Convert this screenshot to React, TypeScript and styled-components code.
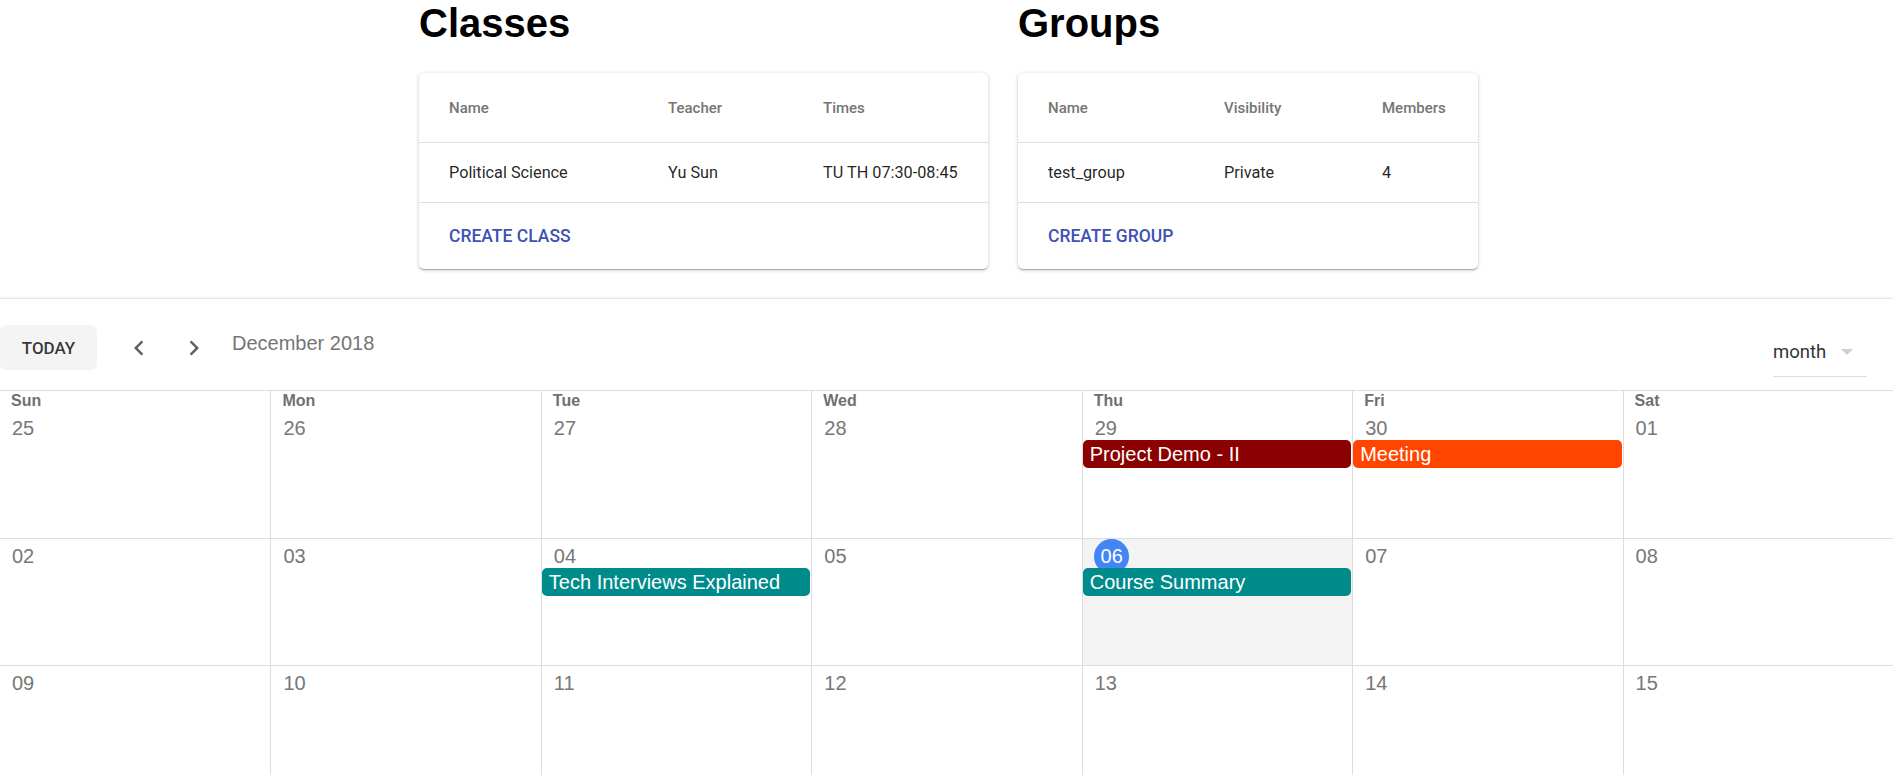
import React from "react";
import styled, { createGlobalStyle } from "styled-components";

const GlobalStyle = createGlobalStyle`
  html, body { margin: 0; padding: 0; background: #fff; }
  body { font-family: "Liberation Sans", Arial, sans-serif; }
  *, *::before, *::after { box-sizing: border-box; }
`;

const Page = styled.div`
  width: 100%;
`;

const Summary = styled.section`
  display: flex;
  justify-content: center;
  gap: 30px;
  padding-left: 4px;
  padding-bottom: 29px;
`;

const Panel = styled.div<{ $width: number }>`
  display: flex;
  flex-direction: column;
  gap: 27px;
  width: ${(p) => p.$width}px;
`;

const Heading = styled.h1`
  margin: 0;
  font: bold 40px/46px "Liberation Sans", Arial, sans-serif;
  color: #000;
`;

const Card = styled.div`
  background: #fff;
  border-radius: 5px;
  box-shadow: 0 1px 4px 0 rgba(0, 0, 0, 0.2), 0 1px 1px 0 rgba(0, 0, 0, 0.14),
    0 2px 1px -1px rgba(0, 0, 0, 0.12);
  font-family: Roboto, "Liberation Sans", Arial, sans-serif;
`;

const TableRow = styled.div<{ $cols: string; $height: number }>`
  display: grid;
  grid-template-columns: ${(p) => p.$cols};
  align-items: center;
  padding: 0 30px;
  height: ${(p) => p.$height}px;
  border-bottom: 1px solid #e0e0e0;
`;

const HeadCell = styled.div`
  font-size: 15px;
  font-weight: 500;
  color: #757575;
  white-space: nowrap;
`;

const BodyCell = styled.div`
  font-size: 16.25px;
  font-weight: 400;
  color: rgba(0, 0, 0, 0.87);
  white-space: nowrap;
`;

const CardFooter = styled.div`
  height: 66px;
  display: flex;
  align-items: center;
  padding: 0 30px;
`;

const TextButton = styled.button`
  border: 0;
  background: none;
  padding: 0;
  font-family: Roboto, "Liberation Sans", Arial, sans-serif;
  font-size: 17.5px;
  font-weight: 500;
  color: #3f51b5;
  text-transform: uppercase;
  cursor: pointer;
`;

const CalendarSection = styled.section`
  border-top: 1px solid #e8e8e8;
  box-shadow: 0 -1px 3px rgba(0, 0, 0, 0.04);
`;

const Toolbar = styled.div`
  height: 91px;
  display: flex;
  align-items: flex-start;
  justify-content: space-between;
  padding: 26px 26px 0 0;
`;

const ToolGroup = styled.div`
  display: flex;
  align-items: flex-start;
`;

const TodayButton = styled.button`
  width: 97px;
  height: 45px;
  border: 0;
  border-radius: 6px;
  background: #f4f4f4;
  font-family: Roboto, "Liberation Sans", Arial, sans-serif;
  font-size: 17px;
  font-weight: 500;
  color: rgba(0, 0, 0, 0.78);
  padding: 0;
`;

const NavGroup = styled.div`
  display: flex;
  gap: 11px;
  margin-left: 20px;
`;

const NavButton = styled.button`
  width: 44px;
  height: 45px;
  border: 0;
  background: none;
  padding: 0;
  display: flex;
  align-items: center;
  justify-content: center;
  color: #616161;
`;

const Title = styled.div`
  margin-left: 16px;
  margin-top: 6px;
  font-size: 20px;
  line-height: 24px;
  color: #757575;
`;

const SelectBox = styled.div`
  width: 94px;
  height: 36px;
  margin-top: 16px;
  display: flex;
  align-items: flex-start;
  justify-content: space-between;
  border-bottom: 1px solid #dcdcdc;
`;

const SelectValue = styled.span`
  font-family: Roboto, "Liberation Sans", Arial, sans-serif;
  font-size: 18.5px;
  line-height: 22px;
  color: #333;
`;

const Caret = styled.svg`
  margin-top: 8px;
  margin-right: 14px;
`;

const MonthGrid = styled.div`
  border-top: 1px solid #ddd;
`;

const Week = styled.div<{ $height: number; $first?: boolean }>`
  display: grid;
  grid-template-columns: repeat(7, 1fr);
  height: ${(p) => p.$height}px;
  border-top: ${(p) => (p.$first ? "0" : "1px solid #ddd")};
`;

const DayName = styled.div`
  padding-left: 11px;
  font-size: 16px;
  font-weight: bold;
  line-height: 20px;
  color: #707070;
  & + & {
    border-left: 1px solid #ddd;
  }
`;

const DayCell = styled.div<{ $today?: boolean }>`
  min-width: 0;
  background: ${(p) => (p.$today ? "#f3f3f3" : "transparent")};
  & + & {
    border-left: 1px solid #ddd;
  }
`;

const DateLine = styled.div`
  height: 29px;
  padding-left: 12px;
`;

const DateNum = styled.span<{ $today?: boolean }>`
  display: inline-flex;
  align-items: center;
  justify-content: center;
  height: 35px;
  min-width: ${(p) => (p.$today ? "35px" : "0")};
  margin-left: ${(p) => (p.$today ? "-0.5px" : "0")};
  border-radius: 50%;
  background: ${(p) => (p.$today ? "#4285f4" : "transparent")};
  color: ${(p) => (p.$today ? "#fff" : "#777")};
  font-size: 20px;
  line-height: 35px;
`;

const EventBar = styled.div<{ $color: string }>`
  position: relative;
  z-index: 1;
  height: 28px;
  margin-right: 1px;
  padding-left: 7px;
  border-radius: 5px;
  background: ${(p) => p.$color};
  color: #fff;
  font-size: 20px;
  line-height: 28px;
  white-space: nowrap;
  overflow: hidden;
  text-overflow: ellipsis;
`;

const ChevronIcon = ({ dir }: { dir: "left" | "right" }) => (
  <svg width="30" height="30" viewBox="0 0 24 24" fill="currentColor">
    {dir === "left" ? (
      <path d="M15.41 7.41L14 6l-6 6 6 6 1.41-1.41L10.83 12z" />
    ) : (
      <path d="M10 6L8.59 7.41 13.17 12l-4.58 4.59L10 18l6-6z" />
    )}
  </svg>
);

type Ev = { title: string; color: string };
type Day = { n: number; today?: boolean; ev?: Ev };

const DARKRED = "#8b0000";
const ORANGE = "#ff4500";
const TEAL = "#008b8b";

const weeks: Day[][] = [
  [
    { n: 25 },
    { n: 26 },
    { n: 27 },
    { n: 28 },
    { n: 29, ev: { title: "Project Demo - II", color: DARKRED } },
    { n: 30, ev: { title: "Meeting", color: ORANGE } },
    { n: 1 },
  ],
  [
    { n: 2 },
    { n: 3 },
    { n: 4, ev: { title: "Tech Interviews Explained", color: TEAL } },
    { n: 5 },
    { n: 6, today: true, ev: { title: "Course Summary", color: TEAL } },
    { n: 7 },
    { n: 8 },
  ],
  [9, 10, 11, 12, 13, 14, 15].map((n) => ({ n })),
];

const dayNames = ["Sun", "Mon", "Tue", "Wed", "Thu", "Fri", "Sat"];
const pad = (n: number) => (n < 10 ? `0${n}` : `${n}`);

const CLASS_COLS = "219px 155px 1fr";
const GROUP_COLS = "176px 158px 1fr";

export default function App() {
  return (
    <Page>
      <GlobalStyle />
      <Summary>
        <Panel $width={569}>
          <Heading>Classes</Heading>
          <Card>
            <TableRow $cols={CLASS_COLS} $height={70}>
              <HeadCell>Name</HeadCell>
              <HeadCell>Teacher</HeadCell>
              <HeadCell>Times</HeadCell>
            </TableRow>
            <TableRow $cols={CLASS_COLS} $height={60}>
              <BodyCell>Political Science</BodyCell>
              <BodyCell>Yu Sun</BodyCell>
              <BodyCell>TU TH 07:30-08:45</BodyCell>
            </TableRow>
            <CardFooter>
              <TextButton>Create Class</TextButton>
            </CardFooter>
          </Card>
        </Panel>
        <Panel $width={460}>
          <Heading>Groups</Heading>
          <Card>
            <TableRow $cols={GROUP_COLS} $height={70}>
              <HeadCell>Name</HeadCell>
              <HeadCell>Visibility</HeadCell>
              <HeadCell>Members</HeadCell>
            </TableRow>
            <TableRow $cols={GROUP_COLS} $height={60}>
              <BodyCell>test_group</BodyCell>
              <BodyCell>Private</BodyCell>
              <BodyCell>4</BodyCell>
            </TableRow>
            <CardFooter>
              <TextButton>Create Group</TextButton>
            </CardFooter>
          </Card>
        </Panel>
      </Summary>

      <CalendarSection>
        <Toolbar>
          <ToolGroup>
            <TodayButton>TODAY</TodayButton>
            <NavGroup>
              <NavButton aria-label="previous">
                <ChevronIcon dir="left" />
              </NavButton>
              <NavButton aria-label="next">
                <ChevronIcon dir="right" />
              </NavButton>
            </NavGroup>
            <Title>December 2018</Title>
          </ToolGroup>
          <SelectBox>
            <SelectValue>month</SelectValue>
            <Caret width="12" height="6" viewBox="0 0 12 6">
              <path d="M0 0 L6 6 L12 0 Z" fill="#cfcfcf" />
            </Caret>
          </SelectBox>
        </Toolbar>

        <MonthGrid>
          <Week $height={20} $first>
            {dayNames.map((d) => (
              <DayName key={d}>{d}</DayName>
            ))}
          </Week>
          {weeks.map((w, i) => (
            <Week key={i} $height={127} $first={i === 0}>
              {w.map((d, j) => (
                <DayCell key={j} $today={d.today}>
                  <DateLine>
                    <DateNum $today={d.today}>{pad(d.n)}</DateNum>
                  </DateLine>
                  {d.ev && <EventBar $color={d.ev.color}>{d.ev.title}</EventBar>}
                </DayCell>
              ))}
            </Week>
          ))}
        </MonthGrid>
      </CalendarSection>
    </Page>
  );
}
